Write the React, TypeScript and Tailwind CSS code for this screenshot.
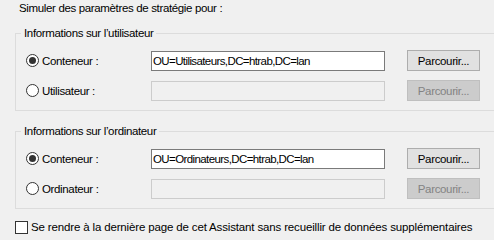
import React from "react";

function Radio({ checked }: { checked?: boolean }) {
  return (
    <div className="w-[13px] h-[13px] rounded-full border border-[#333333] bg-white flex items-center justify-center shrink-0">
      {checked && <div className="w-[7px] h-[7px] rounded-full bg-[#333333]" />}
    </div>
  );
}

function Row({
  checked,
  label,
  value,
  enabled,
}: {
  checked?: boolean;
  label: string;
  value?: string;
  enabled: boolean;
}) {
  return (
    <div className="flex items-center h-[21px]">
      <div className="w-[135px] pl-[10px] flex items-center gap-[3px] shrink-0">
        <Radio checked={checked} />
        <span className="text-[#000000]">{label}</span>
      </div>
      {enabled ? (
        <div className="w-[234px] h-[20px] border border-[#7a7a7a] bg-white flex items-center px-[1px] shrink-0">
          <span className="tracking-[-0.6px]">{value}</span>
        </div>
      ) : (
        <div className="w-[234px] h-[20px] border border-[#cccccc] bg-[#f0f0f0] shrink-0" />
      )}
      {enabled ? (
        <div className="ml-[22px] w-[73px] h-[21px] border border-[#adadad] bg-[#e1e1e1] flex items-center justify-center shrink-0">
          Parcourir...
        </div>
      ) : (
        <div className="ml-[22px] w-[73px] h-[21px] border border-[#bfbfbf] bg-[#cccccc] text-[#838383] flex items-center justify-center shrink-0">
          Parcourir...
        </div>
      )}
    </div>
  );
}

function Group({
  title,
  value,
  otherLabel,
}: {
  title: string;
  value: string;
  otherLabel: string;
}) {
  return (
    <div className="relative ml-[15px] w-[500px] h-[78px] border-l border-t border-b border-[#dcdcdc]">
      <div className="absolute left-[5px] top-[-9px] px-[3px] bg-[#f0f0f0] leading-[16px]">
        {title}
      </div>
      <div className="pt-[16px] flex flex-col gap-[9px]">
        <Row checked label="Conteneur :" value={value} enabled />
        <Row label={otherLabel} enabled={false} />
      </div>
    </div>
  );
}

export default function App() {
  return (
    <div className="w-[494px] h-[240px] overflow-hidden bg-[#f0f0f0] text-[11.5px] tracking-[-0.35px] leading-[16px] text-black font-['Liberation_Sans',Arial,sans-serif]">
      <div className="pl-[19px] pt-[0px] h-[33px]">Simuler des paramètres de stratégie pour :</div>
      <Group
        title="Informations sur l’utilisateur"
        value="OU=Utilisateurs,DC=htrab,DC=lan"
        otherLabel="Utilisateur :"
      />
      <div className="h-[20px]" />
      <Group
        title="Informations sur l’ordinateur"
        value="OU=Ordinateurs,DC=htrab,DC=lan"
        otherLabel="Ordinateur :"
      />
      <div className="flex items-center ml-[15px] mt-[10px] gap-[3px] h-[16px]">
        <div className="w-[13px] h-[13px] border border-[#333333] bg-white shrink-0" />
        <span className="tracking-[-0.15px]">Se rendre à la dernière page de cet Assistant sans recueillir de données supplémentaires</span>
      </div>
    </div>
  );
}
